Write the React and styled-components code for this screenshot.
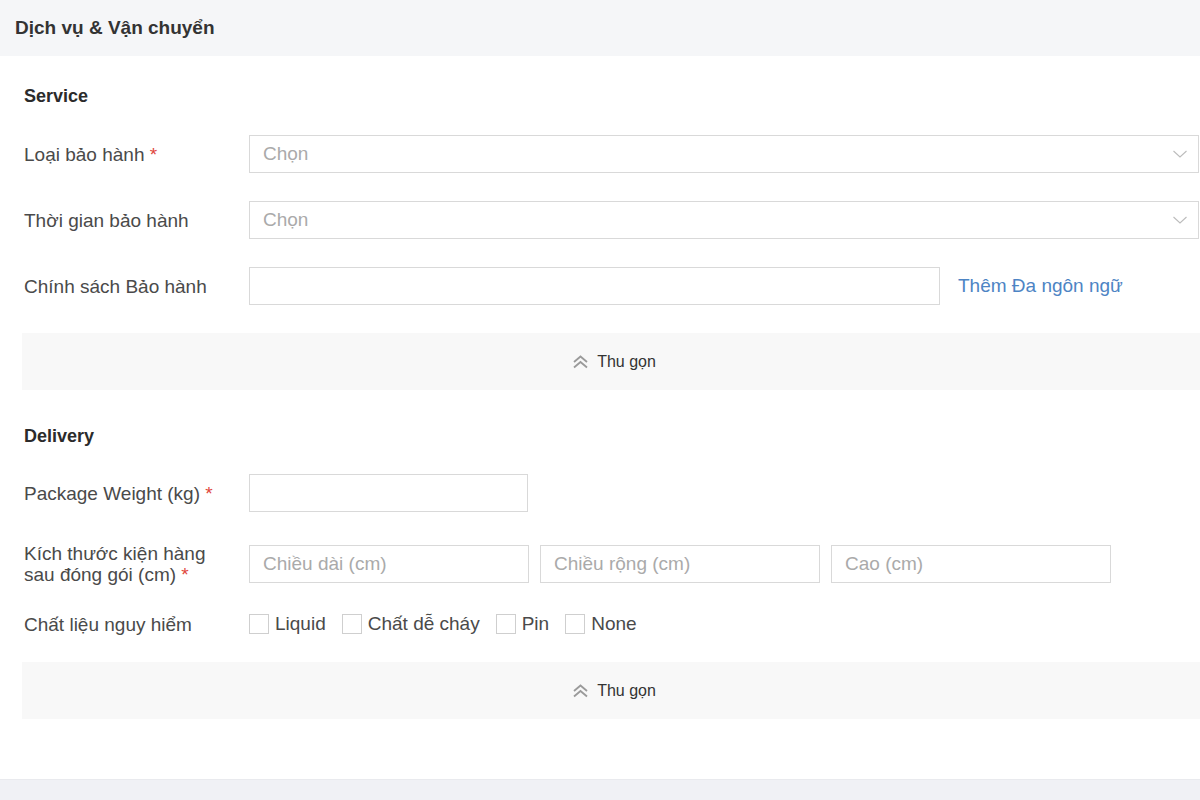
import React from 'react';
import styled, {createGlobalStyle} from 'styled-components';

// Trang chỉnh sửa dịch vụ & vận chuyển
const GlobalStyle = createGlobalStyle`
    body {
        margin: 0;
        background: #ffffff;
        font-family: "Liberation Sans", Arial, sans-serif;
        overflow: hidden;
    }
`;

const Page = styled.div`
    width: 1200px;
    height: 800px;
    display: flex;
    flex-direction: column;
    background: #ffffff;
`;

const Header = styled.div`
    height: 56px;
    flex-shrink: 0;
    display: flex;
    align-items: center;
    padding-left: 15px;
    background: #f5f6f8;
    font-size: 19px;
    font-weight: 700;
    color: #333;
`;

const Body = styled.div`
    flex: 1;
    padding-left: 22px;
    display: flex;
    flex-direction: column;
`;

const SectionTitle = styled.div`
    margin-top: ${p => p.$top}px;
    height: 20px;
    line-height: 20px;
    padding-left: 2px;
    font-size: 18px;
    font-weight: 700;
    color: #2b2b2b;
`;

const Row = styled.div`
    margin-top: ${p => p.$top}px;
    display: flex;
    align-items: center;
    min-height: 38px;
`;

const Label = styled.div`
    width: 227px;
    flex-shrink: 0;
    padding-left: 2px;
    box-sizing: border-box;
    font-size: 19px;
    line-height: 21px;
    color: #4a4a4a;

    span {
        color: #e0463c;
    }
`;

const Field = styled.div`
    display: flex;
    align-items: center;
    gap: ${p => p.$gap || 0}px;
`;

const Select = styled.div`
    width: 950px;
    height: 38px;
    box-sizing: border-box;
    border: 1px solid #d9d9d9;
    display: flex;
    align-items: center;
    justify-content: space-between;
    padding: 0 10px 0 13px;
    font-size: 19px;
    color: #aaa;
`;

const Input = styled.input`
    width: ${p => p.$w}px;
    height: 38px;
    box-sizing: border-box;
    border: 1px solid #d9d9d9;
    border-radius: 0;
    padding: 0 13px;
    font-family: "Liberation Sans", Arial, sans-serif;
    font-size: 19px;
    color: #333;
    outline: none;

    &::placeholder {
        color: #aaa;
    }
`;

const Link = styled.a`
    margin-left: 18px;
    font-size: 19px;
    color: #4d84c4;
    text-decoration: none;
`;

const Collapse = styled.div`
    margin-top: ${p => p.$top}px;
    height: 57px;
    background: #f8f8f8;
    display: flex;
    align-items: center;
    justify-content: center;
    gap: 8px;
    padding-left: 6px;
    font-size: 16px;
    color: #333;
`;

const Checks = styled.div`
    display: flex;
    align-items: center;
`;

const Check = styled.label`
    display: flex;
    align-items: center;
    margin-right: 16px;
    font-size: 19px;
    color: #4a4a4a;

    i {
        width: 20px;
        height: 20px;
        box-sizing: border-box;
        border: 1px solid #cfcfcf;
        margin-right: 6px;
    }
`;

const BottomBand = styled.div`
    height: 20px;
    flex-shrink: 0;
    background: #f0f1f5;
    border-top: 1px solid #e9eaee;
`;

function Chevron() {
    return (
        <svg width="16" height="10" viewBox="0 0 16 10">
            <path d="M1.5 2 L8 8 L14.5 2" fill="none" stroke="#bcbcbc" strokeWidth="1.1" />
        </svg>
    );
}

function DoubleUp() {
    return (
        <svg width="17" height="16" viewBox="0 0 17 16">
            <path d="M2 8 L8.5 2.5 L15 8 M2 13.5 L8.5 8 L15 13.5" fill="none" stroke="#9a9a9a" strokeWidth="1.8" />
        </svg>
    );
}

function CheckItem(props) {
    return (
        <Check>
            <i />
            {props.name}
        </Check>
    );
}

export default function App() {
    return (
        <Page>
            <GlobalStyle />
            <Header>Dịch vụ &amp; Vận chuyển</Header>

            <Body>
                {/* Service */}
                <SectionTitle $top={30}>Service</SectionTitle>

                <Row $top={29}>
                    <Label>Loại bảo hành <span>*</span></Label>
                    <Select>Chọn <Chevron /></Select>
                </Row>

                <Row $top={28}>
                    <Label>Thời gian bảo hành</Label>
                    <Select>Chọn <Chevron /></Select>
                </Row>

                <Row $top={28}>
                    <Label>Chính sách Bảo hành</Label>
                    <Field>
                        <Input $w={691} />
                        <Link href="#">Thêm Đa ngôn ngữ</Link>
                    </Field>
                </Row>

                <Collapse $top={28}><DoubleUp /> Thu gọn</Collapse>

                {/* Delivery */}
                <SectionTitle $top={36}>Delivery</SectionTitle>

                <Row $top={28}>
                    <Label>Package Weight (kg) <span>*</span></Label>
                    <Input $w={279} />
                </Row>

                <Row $top={31}>
                    <Label>Kích thước kiện hàng<br />sau đóng gói (cm) <span>*</span></Label>
                    <Field $gap={11}>
                        <Input $w={280} placeholder="Chiều dài (cm)" />
                        <Input $w={280} placeholder="Chiều rộng (cm)" />
                        <Input $w={280} placeholder="Cao (cm)" />
                    </Field>
                </Row>

                <Row $top={20}>
                    <Label>Chất liệu nguy hiểm</Label>
                    <Checks>
                        <CheckItem name="Liquid" />
                        <CheckItem name="Chất dễ cháy" />
                        <CheckItem name="Pin" />
                        <CheckItem name="None" />
                    </Checks>
                </Row>

                <Collapse $top={19}><DoubleUp /> Thu gọn</Collapse>
            </Body>

            <BottomBand />
        </Page>
    );
}
